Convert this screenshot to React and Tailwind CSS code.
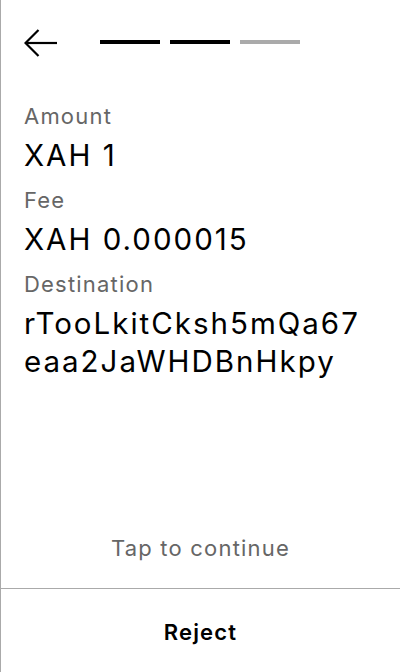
import React from "react";

function Field({ label, children }) {
  return (
    <div className="flex flex-col">
      <div className="text-[22px] leading-[26px] tracking-[1.2px] text-[#666666] mb-[7px]">{label}</div>
      <div className="text-[29.5px] leading-[38px] tracking-[2px] text-black">{children}</div>
    </div>
  );
}

export default function App() {
  return (
    <div
      className="w-[400px] h-[672px] bg-white border-l border-[#aaaaaa] flex flex-col overflow-hidden"
      style={{ fontFamily: "Inter, 'Noto Sans', sans-serif" }}
    >
      <div className="h-[86px] flex items-center pl-[23px] shrink-0">
        <svg width="34" height="30" viewBox="0 0 34 30" className="shrink-0">
          <path d="M33 15 H2.5" stroke="black" strokeWidth="2.2" fill="none" />
          <path d="M14.5 2 L1.5 15 L14.5 28" stroke="black" strokeWidth="2.2" fill="none" />
        </svg>
        <div className="flex gap-[10px] ml-[42px] mt-[-2px]">
          <div className="w-[60px] h-[4px] bg-black" />
          <div className="w-[60px] h-[4px] bg-black" />
          <div className="w-[60px] h-[4px] bg-[#aaaaaa]" />
        </div>
      </div>
      <div className="flex flex-col gap-[13px] px-[23px] pt-[17px]">
        <Field label="Amount">XAH 1</Field>
        <Field label="Fee">XAH 0.000015</Field>
        <Field label="Destination">
          <div>rTooLkitCksh5mQa67</div>
          <div>eaa2JaWHDBnHkpy</div>
        </Field>
      </div>
      <div className="flex-1" />
      <div className="text-center text-[22px] leading-[26px] tracking-[1.2px] text-[#666666] mb-[27px]">
        Tap to continue
      </div>
      <div className="border-t border-[#aaaaaa] h-[84px] pt-[3px] flex items-center justify-center shrink-0">
        <span className="text-[22px] tracking-[1.2px] font-semibold text-black">Reject</span>
      </div>
    </div>
  );
}
